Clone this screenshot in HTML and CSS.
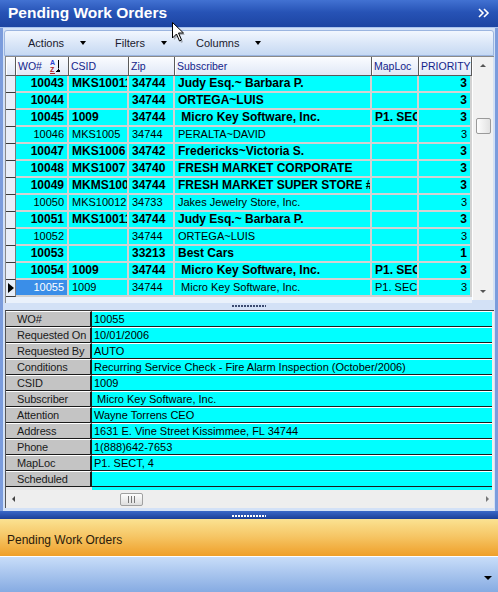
FILE: index.html
```html
<!DOCTYPE html>
<html lang="en">
  <head>
    <meta charset="UTF-8" />
    <title>Pending Work Orders</title>
    <link rel="stylesheet" href="styles.css">
  </head>
  <body>
    <header class="titlebar">
      <span class="title">Pending Work Orders</span>
      <svg class="collapse" viewBox="0 0 12 10" width="12" height="10">
        <polyline points="1,1 5,5 1,9" />
        <polyline points="6,1 10,5 6,9" />
      </svg>
    </header>

    <div class="frame">
      <div class="toolbar">
        <span class="tool">Actions <i class="drop"></i></span>
        <span class="tool">Filters <i class="drop"></i></span>
        <span class="tool">Columns <i class="drop"></i></span>
      </div>

      <div class="grid">
        <div class="grid-body">
          <div class="row head">
            <div class="hd"></div>
            <div class="hd">WO#
              <span class="sort"><span class="az"><b class="a">A</b><b class="z">Z</b></span><i class="down"></i></span>
            </div>
            <div class="hd">CSID</div>
            <div class="hd">Zip</div>
            <div class="hd">Subscriber</div>
            <div class="hd">MapLoc</div>
            <div class="hd">PRIORITY</div>
          </div>

          <div class="row b"><div class="s"></div><div class="c r">10043</div><div class="c">MKS10011</div><div class="c">34744</div><div class="c">Judy Esq.~ Barbara P.</div><div class="c"></div><div class="c r">3</div></div>
          <div class="row b"><div class="s"></div><div class="c r">10044</div><div class="c"></div><div class="c">34744</div><div class="c">ORTEGA~LUIS</div><div class="c"></div><div class="c r">3</div></div>
          <div class="row b"><div class="s"></div><div class="c r">10045</div><div class="c">1009</div><div class="c">34744</div><div class="c">&nbsp;Micro Key Software, Inc.</div><div class="c">P1. SECT, 4</div><div class="c r">3</div></div>
          <div class="row"><div class="s"></div><div class="c r">10046</div><div class="c">MKS1005</div><div class="c">34744</div><div class="c">PERALTA~DAVID</div><div class="c"></div><div class="c r">3</div></div>
          <div class="row b"><div class="s"></div><div class="c r">10047</div><div class="c">MKS1006</div><div class="c">34742</div><div class="c">Fredericks~Victoria S.</div><div class="c"></div><div class="c r">3</div></div>
          <div class="row b"><div class="s"></div><div class="c r">10048</div><div class="c">MKS1007</div><div class="c">34740</div><div class="c">FRESH MARKET CORPORATE</div><div class="c"></div><div class="c r">3</div></div>
          <div class="row b"><div class="s"></div><div class="c r">10049</div><div class="c">MKMS1001</div><div class="c">34744</div><div class="c">FRESH MARKET SUPER STORE #1</div><div class="c"></div><div class="c r">3</div></div>
          <div class="row"><div class="s"></div><div class="c r">10050</div><div class="c">MKS10012</div><div class="c">34733</div><div class="c">Jakes Jewelry Store, Inc.</div><div class="c"></div><div class="c r">3</div></div>
          <div class="row b"><div class="s"></div><div class="c r">10051</div><div class="c">MKS10011</div><div class="c">34744</div><div class="c">Judy Esq.~ Barbara P.</div><div class="c"></div><div class="c r">3</div></div>
          <div class="row"><div class="s"></div><div class="c r">10052</div><div class="c"></div><div class="c">34744</div><div class="c">ORTEGA~LUIS</div><div class="c"></div><div class="c r">3</div></div>
          <div class="row b"><div class="s"></div><div class="c r">10053</div><div class="c"></div><div class="c">33213</div><div class="c">Best Cars</div><div class="c"></div><div class="c r">1</div></div>
          <div class="row b"><div class="s"></div><div class="c r">10054</div><div class="c">1009</div><div class="c">34744</div><div class="c">&nbsp;Micro Key Software, Inc.</div><div class="c">P1. SECT, 4</div><div class="c r">3</div></div>
          <div class="row"><div class="s current"><i class="pointer"></i></div><div class="c r on">10055</div><div class="c">1009</div><div class="c">34744</div><div class="c">&nbsp;Micro Key Software, Inc.</div><div class="c">P1. SECT, 4</div><div class="c r">3</div></div>
        </div>

        <div class="vscroll">
          <div class="sbtn"><i class="up"></i></div>
          <div class="track"><div class="vthumb"></div></div>
          <div class="sbtn"><i class="dn"></i></div>
        </div>
      </div>

      <div class="grip"><span class="dots"></span></div>

      <div class="detail">
        <div class="prop"><div class="key">WO#</div><div class="val">10055</div></div>
        <div class="prop"><div class="key">Requested On</div><div class="val">10/01/2006</div></div>
        <div class="prop"><div class="key">Requested By</div><div class="val">AUTO</div></div>
        <div class="prop"><div class="key">Conditions</div><div class="val">Recurring Service Check - Fire Alarm Inspection (October/2006)</div></div>
        <div class="prop"><div class="key">CSID</div><div class="val">1009</div></div>
        <div class="prop"><div class="key">Subscriber</div><div class="val">&nbsp;Micro Key Software, Inc.</div></div>
        <div class="prop"><div class="key">Attention</div><div class="val">Wayne Torrens CEO</div></div>
        <div class="prop"><div class="key">Address</div><div class="val">1631 E. Vine Street Kissimmee, FL 34744</div></div>
        <div class="prop"><div class="key">Phone</div><div class="val">1(888)642-7653</div></div>
        <div class="prop"><div class="key">MapLoc</div><div class="val">P1. SECT, 4</div></div>
        <div class="prop"><div class="key">Scheduled</div><div class="val"></div></div>
        <div class="filler"></div>

        <div class="hscroll">
          <i class="lt"></i>
          <div class="hthumb"><span class="ridges"></span></div>
          <i class="rt"></i>
        </div>
      </div>
    </div>

    <div class="splitter"><span class="dots light"></span></div>
    <div class="navbar">Pending Work Orders</div>
    <div class="navfoot"><i class="drop"></i></div>

    <!-- mouse pointer left over the title bar -->
    <svg class="cursor" viewBox="0 0 14 21" width="14" height="21">
      <polygon class="shade" points="2,2 2,18 6,14 9,21 11,20 8,13 13,13" />
      <polygon points="0.5,0.5 0.5,16 4.5,12 7.5,19 9.5,18 6.5,11 11.5,11" />
    </svg>
  </body>
</html>
```

FILE: styles.css
```css
* {
  margin: 0;
  padding: 0;
  box-sizing: border-box;
}

:root {
  --cols: 10px 53px 60px 46px 197px 47px 53px;
  --cyan: #00ffff;
  --line: #d2d2d2;
  --frame-blue: #7b9cdc;
}

body {
  position: relative;
  width: 498px;
  height: 592px;
  overflow: hidden;
  font-family: 'Liberation Sans', Arial, sans-serif;
  font-size: 11px;
  color: #000;
  background: var(--frame-blue);
}

i {
  display: block;
}

/* title bar */
.titlebar {
  height: 28px;
  display: flex;
  align-items: center;
  justify-content: space-between;
  padding: 0 8px 1px 8px;
  background: linear-gradient(#4272d2, #2753b6 45%, #1c44a2);
  border-bottom: 1px solid #a9c3ee;
}

.title {
  color: #fff;
  font-weight: bold;
  font-size: 15.5px;
}

.collapse polyline {
  fill: none;
  stroke: #fff;
  stroke-width: 1.6;
}

/* the light blue frame round grid and details */
.frame {
  height: 483px;
  display: flex;
  flex-direction: column;
  padding: 2px 1px 3px 1px;
  background: #d3e1f6;
  border-left: 3px solid var(--frame-blue);
  border-right: 3px solid var(--frame-blue);
}

.toolbar {
  height: 26px;
  flex: none;
  display: flex;
  align-items: center;
  gap: 29px;
  padding-left: 23px;
  border: 1px solid #9bb5e0;
  border-radius: 3px 3px 0 0;
  background: linear-gradient(#f2f7fe, #dbe7f8 50%, #c6d9f3);
  color: #1a1a2e;
}

.tool {
  display: flex;
  align-items: center;
  gap: 16px;
}

.drop {
  width: 0;
  height: 0;
  border-left: 3.5px solid transparent;
  border-right: 3.5px solid transparent;
  border-top: 4px solid #000;
}

/* work order grid */
.grid {
  height: 247px;
  flex: none;
  display: flex;
  margin-left: 1px;
  border-top: 1px solid #8a8a8a;
  border-left: 1px solid #8a8a8a;
}

.grid-body {
  width: 466px;
  background: #eaf1fb;
}

.row {
  display: grid;
  grid-template-columns: var(--cols);
  height: 17px;
}

.row.b {
  font-weight: bold;
  font-size: 12px;
}

.row.head {
  height: 19px;
}

.hd {
  display: flex;
  align-items: center;
  padding-left: 2px;
  font-size: 10.5px;
  background: linear-gradient(#fbfcff, #e0e8f6);
  color: #14248a;
  border-right: 1px solid #5a5a5a;
  border-bottom: 1px solid #5a5a5a;
  box-shadow: inset 1px 1px #fff;
  white-space: nowrap;
  overflow: hidden;
}

.sort {
  display: flex;
  align-items: center;
  margin-left: 8px;
  gap: 1px;
}

.az {
  display: flex;
  flex-direction: column;
  font-size: 7px;
  line-height: 7px;
}

.az .a {
  color: #2c3fd0;
}

.az .z {
  color: #b02020;
  border-bottom: 1px solid #b02020;
}

.down {
  width: 5px;
  height: 12px;
  background:
    linear-gradient(#000, #000) center top / 1px 8px no-repeat,
    linear-gradient(to bottom right, transparent 50%, #000 50%) left bottom / 2.5px 4px no-repeat,
    linear-gradient(to bottom left, transparent 50%, #000 50%) right bottom / 2.5px 4px no-repeat;
}

.s {
  display: flex;
  align-items: center;
  justify-content: center;
  background: #e8eef8;
  border-right: 1px solid #7a7a7a;
  border-bottom: 1px solid #3a3a3a;
}

.pointer {
  width: 0;
  height: 0;
  border-top: 5px solid transparent;
  border-bottom: 5px solid transparent;
  border-left: 6px solid #000;
}

.c {
  padding: 0 2px 0 3px;
  line-height: 15px;
  background: var(--cyan);
  border-right: 2px solid var(--line);
  border-bottom: 2px solid var(--line);
  white-space: nowrap;
  overflow: hidden;
}

.c.r {
  text-align: right;
  padding-right: 3px;
}

.c.on {
  background: #3a8ee8;
  color: #fff;
}

/* vertical scroll bar */
.vscroll {
  width: 21px;
  height: 243px;
  display: flex;
  flex-direction: column;
  background: #f1f1f1;
  border-left: 1px solid #fff;
}

.sbtn {
  height: 17px;
  display: flex;
  align-items: center;
  justify-content: center;
}

.up,
.dn {
  width: 0;
  height: 0;
  border-left: 3.5px solid transparent;
  border-right: 3.5px solid transparent;
}

.up {
  border-bottom: 3px solid #555;
}

.dn {
  border-top: 3px solid #555;
}

.track {
  flex: 1;
  padding: 44px 0 0 3px;
}

.vthumb {
  width: 15px;
  height: 16px;
  border: 1px solid #9a9a9a;
  border-radius: 2px;
  background: linear-gradient(to right, #fdfdfd, #e2e2e2);
}

/* little dotted grips of the splitters */
.grip {
  height: 7px;
  flex: none;
  display: flex;
  justify-content: center;
  padding-top: 2px;
}

.dots {
  width: 34px;
  height: 2px;
  background: repeating-linear-gradient(90deg, #3c4a70 0 2px, transparent 2px 3px);
}

.dots.light {
  background: repeating-linear-gradient(90deg, #fff 0 2px, transparent 2px 3px);
}

/* detail property list */
.detail {
  height: 198px;
  flex: none;
  margin-left: 1px;
  border-top: 1px solid #3a3a3a;
  border-left: 1px solid #555;
  background: #eeeeee;
}

.prop {
  display: grid;
  grid-template-columns: 86px 1fr;
  height: 16px;
}

.key,
.val {
  line-height: 14px;
  border-top: 1px solid #fff;
  border-bottom: 1px solid #1a1a1a;
  white-space: nowrap;
  overflow: hidden;
}

.key {
  padding-left: 11px;
  background: #c4c4c4;
  color: #1a1a1a;
  letter-spacing: -0.15px;
  border-right: 2px solid #1a1a1a;
}

.val {
  padding-left: 2px;
  background: var(--cyan);
  margin-right: 2px;
}

.filler {
  height: 3px;
  background: linear-gradient(to right, #e6e6e6 86px, var(--cyan) 86px);
  margin-right: 2px;
}

.hscroll {
  height: 18px;
  display: flex;
  align-items: center;
  padding: 0 5px 0 6px;
  background: #eeeeee;
}

.lt,
.rt {
  width: 0;
  height: 0;
  border-top: 3.5px solid transparent;
  border-bottom: 3.5px solid transparent;
}

.lt {
  border-right: 3px solid #444;
}

.rt {
  margin-left: auto;
  border-left: 3px solid #777;
}

.hthumb {
  width: 23px;
  height: 13px;
  margin-left: 105px;
  display: flex;
  align-items: center;
  justify-content: center;
  border: 1px solid #a0a0a0;
  border-radius: 2px;
  background: linear-gradient(#fdfdfd, #dedede);
}

.ridges {
  width: 7px;
  height: 7px;
  background: repeating-linear-gradient(90deg, #777 0 1px, transparent 1px 3px);
}

/* bottom navigation pane */
.splitter {
  height: 8px;
  display: flex;
  justify-content: center;
  align-items: flex-end;
  padding-bottom: 2px;
  background: linear-gradient(#3a68c8, #1b3f98);
}

.navbar {
  height: 38px;
  display: flex;
  align-items: center;
  padding: 4px 0 0 7px;
  font-size: 12px;
  color: #2a1a0a;
  background: linear-gradient(#fbe292, #f6c767 45%, #ef9f29);
  border-bottom: 1px solid #fff;
}

.navfoot {
  height: 35px;
  display: flex;
  align-items: center;
  justify-content: flex-end;
  padding: 6px 6px 0 0;
  background: linear-gradient(#c8ddf9, #86abe2);
}

.navfoot .drop {
  border-left-width: 4px;
  border-right-width: 4px;
  border-top-width: 4px;
}

.cursor {
  position: absolute;
  left: 172px;
  top: 22px;
}

.cursor polygon {
  fill: #fff;
  stroke: #000;
  stroke-width: 1;
}

.cursor .shade {
  fill: rgba(0, 0, 0, 0.25);
  stroke: none;
}
```
